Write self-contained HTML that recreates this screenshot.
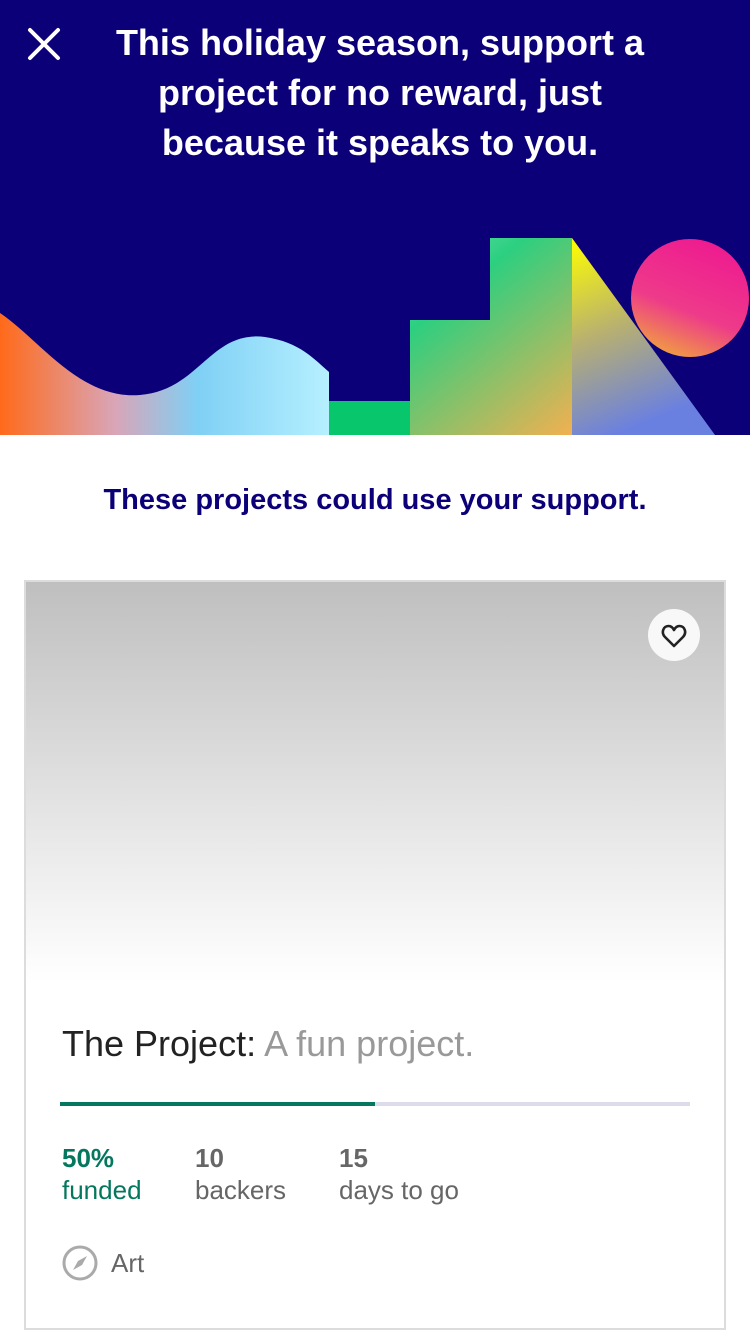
<!DOCTYPE html>
<html><head><meta charset="utf-8"><style>
body{margin:0;width:750px;height:1334px;overflow:hidden;background:#fff;font-family:"Liberation Sans",sans-serif;position:relative}
.banner{position:absolute;left:0;top:0;width:750px;height:435px;background:#0c0079;overflow:hidden}
.headline{position:absolute;left:30px;width:700px;top:18px;color:#fff;font-size:36px;line-height:50px;text-align:center;font-weight:bold;white-space:nowrap}
.sub{position:absolute;top:484px;left:0;width:750px;text-align:center;color:#0c0079;font-size:29px;font-weight:bold}
.card{position:absolute;left:24px;top:580px;width:698px;height:746px;border:2px solid #dcdcdc}
.img{position:absolute;left:0;top:0;width:698px;height:400px;background:linear-gradient(#bfbfbf,#e6e6e6 60%,#fff 100%)}
.heart{position:absolute;left:622px;top:27px;width:52px;height:52px;border-radius:50%;background:#f8f8f8}
.title{position:absolute;left:36px;top:441px;font-size:36px;color:#222}
.title span{color:#999}
.bar{position:absolute;left:34px;top:520px;width:630px;height:4px;background:#dcdcea}
.bar div{width:315px;height:4px;background:#05775e}
.stat{position:absolute;top:560px;font-size:26px;line-height:32px;color:#666}
.stat b{display:block}
</style></head><body>
<div class="banner">
<svg width="750" height="435" style="position:absolute;left:0;top:0">
<defs>
<linearGradient id="w" x1="0" y1="0" x2="1" y2="0"><stop offset="0" stop-color="#ff6a1a"/><stop offset=".35" stop-color="#d9a5b8"/><stop offset=".6" stop-color="#7fd0f5"/><stop offset="1" stop-color="#b6f0ff"/></linearGradient>
<linearGradient id="s" x1="0" y1="0" x2="1" y2="1"><stop offset="0" stop-color="#9ff0dc"/><stop offset=".4" stop-color="#2ccf80"/><stop offset="1" stop-color="#f2b050"/></linearGradient>
<linearGradient id="t" x1="0" y1="0" x2=".3" y2="1"><stop offset="0" stop-color="#ffff00"/><stop offset=".5" stop-color="#b8b070"/><stop offset="1" stop-color="#6a80e0"/></linearGradient>
<linearGradient id="c" x1=".3" y1="1" x2=".7" y2="0"><stop offset="0" stop-color="#f0a040"/><stop offset=".4" stop-color="#ee3a8a"/><stop offset="1" stop-color="#ee1a90"/></linearGradient>
</defs>
<path d="M0 313 C40 340 80 400 140 395 C200 390 210 330 265 337 C300 342 315 360 329 372 L329 435 L0 435Z" fill="url(#w)"/>
<path d="M329 401 L410 401 L410 320 L490 320 L490 238 L572 238 L572 435 L329 435Z" fill="url(#s)"/>
<path d="M329 401 L410 401 L410 435 L329 435Z" fill="#07c66c"/>
<path d="M572 238 L715 435 L572 435Z" fill="url(#t)"/>
<circle cx="690" cy="298" r="59" fill="url(#c)"/>
</svg>
<svg width="34" height="34" style="position:absolute;left:27px;top:27px"><path d="M3 3L31 31M31 3L3 31" stroke="#fff" stroke-width="4" stroke-linecap="round"/></svg>
<div class="headline">This holiday season, support a<br>project for no reward, just<br>because it speaks to you.</div>
</div>
<div class="sub">These projects could use your support.</div>
<div class="card">
<div class="img"></div>
<div class="heart"><svg width="52" height="52"><path d="M26 37 L17 28 C13 24 15 17 20.5 17 C23.5 17 25 19 26 21 C27 19 28.5 17 31.5 17 C37 17 39 24 35 28Z" fill="none" stroke="#222" stroke-width="2.6" stroke-linejoin="round"/></svg></div>
<div class="title">The Project: <span>A fun project.</span></div>
<div class="bar"><div></div></div>
<div class="stat" style="left:36px;color:#05775e"><b>50%</b>funded</div>
<div class="stat" style="left:169px"><b>10</b>backers</div>
<div class="stat" style="left:313px"><b>15</b>days to go</div>
<svg width="38" height="38" style="position:absolute;left:35px;top:662px"><circle cx="19" cy="19" r="16" fill="none" stroke="#aaa" stroke-width="3"/><path d="M26 12 L21 21 L12 26 L17 17Z" fill="#aaa"/></svg>
<div style="position:absolute;left:85px;top:666px;font-size:26px;color:#666">Art</div>
</div>
</body></html>
